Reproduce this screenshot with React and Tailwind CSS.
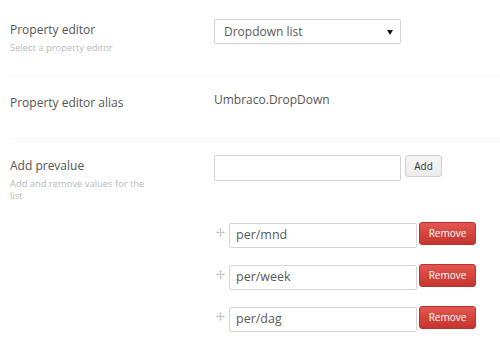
import React from 'react';

function MoveIcon() {
  return (
    <svg width="9" height="9" viewBox="0 0 9 9" className="text-[#c4c4c4]">
      <path d="M4 1.5h1v6H4z M1.5 4h6v1h-6z" fill="currentColor" />
      <path d="M4.5 0L6 1.8H3z M4.5 9L3 7.2h3z M0 4.5L1.8 3v3z M9 4.5L7.2 6V3z" fill="currentColor" />
    </svg>
  );
}

const prevalues = ['per/mnd', 'per/week', 'per/dag'];

export default function App() {
  return (
    <div className="w-[500px] h-[358px] overflow-hidden bg-white font-['Open_Sans',sans-serif] text-[#545454]">
      {/* Property editor */}
      <div className="ml-[10px] flex h-[76px] border-b border-[#f5f5f5] pt-[19px]">
        <div className="w-[204px]">
          <div className="text-[12px] leading-[22px]">Property editor</div>
          <div className="mt-[1px] text-[9.4px] leading-[12px] text-[#b8b8b8]">Select a property editor</div>
        </div>
        <div className="relative flex h-[25px] w-[187px] items-center rounded-[2px] border border-[#d4d4d4] bg-white pl-[9px] shadow-[0_1px_1px_rgba(0,0,0,0.05)]">
          <span className="text-[12px] text-[#5a5a5a]">Dropdown list</span>
          <svg width="6" height="5" viewBox="0 0 6 5" className="absolute right-[7px] top-[10px]">
            <path d="M0 0h6L3 5z" fill="#111" />
          </svg>
        </div>
      </div>

      {/* Alias */}
      <div className="ml-[10px] flex h-[63px] border-b border-[#f5f5f5] pt-[16px]">
        <div className="w-[204px] text-[12px] leading-[22px]">Property editor alias</div>
        <div className="-mt-[3px] text-[12px] leading-[22px] text-[#555]">Umbraco.DropDown</div>
      </div>

      {/* Prevalues */}
      <div className="ml-[10px] flex pt-[16px]">
        <div className="w-[204px]">
          <div className="text-[12px] leading-[22px]">Add prevalue</div>
          <div className="mt-[1px] w-[140px] text-[9.4px] leading-[11.5px] text-[#b8b8b8]">Add and remove values for the list</div>
        </div>
        <div className="flex flex-col">
          <div className="flex items-start gap-[4px]">
            <div className="h-[26px] w-[187px] rounded-[2px] border border-[#d4d4d4] bg-white"></div>
            <button className="h-[22px] w-[37px] rounded-[3px] border border-[#cfcfcf] bg-gradient-to-b from-[#f6f6f6] to-[#ebebeb] text-[10px] text-[#333]">Add</button>
          </div>
          <div className="mt-[42px] flex flex-col gap-[17px]">
            {prevalues.map((v) => (
              <div key={v} className="flex items-start">
                <div className="flex w-[15px] pl-[2px] pt-[5px]">
                  <MoveIcon />
                </div>
                <div className="flex h-[25px] w-[188px] items-center rounded-[2px] border border-[#d4d4d4] bg-white pl-[6px] text-[12.5px] text-[#5a5a5a]">
                  {v}
                </div>
                <button className="ml-[2px] -mt-[1px] h-[23px] w-[57px] rounded-[3px] border border-[#b8322e] bg-gradient-to-b from-[#e4564f] to-[#c5332f] text-[10px] text-white">
                  Remove
                </button>
              </div>
            ))}
          </div>
        </div>
      </div>
    </div>
  );
}
